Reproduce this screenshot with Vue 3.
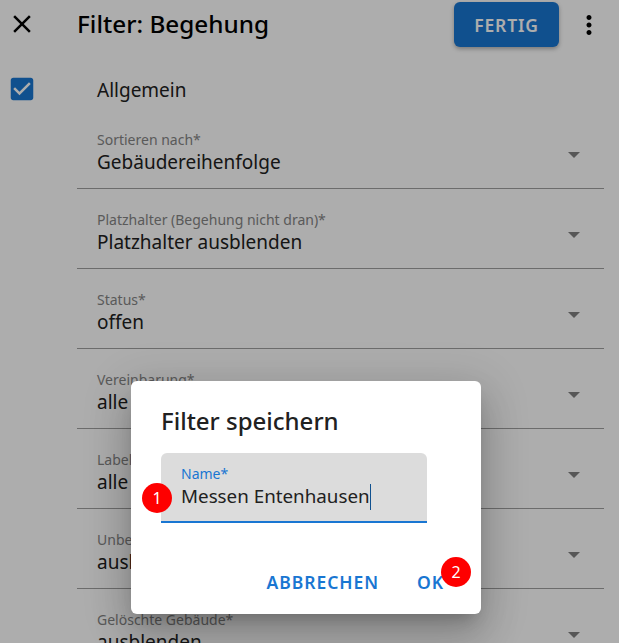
<script setup>
const fields = [
  { label: 'Sortieren nach*', value: 'Gebäudereihenfolge' },
  { label: 'Platzhalter (Begehung nicht dran)*', value: 'Platzhalter ausblenden' },
  { label: 'Status*', value: 'offen' },
  { label: 'Vereinbarung*', value: 'alle' },
  { label: 'Label*', value: 'alle' },
  { label: 'Unbekannt*', value: 'ausblenden' },
  { label: 'Gelöschte Gebäude*', value: 'ausblenden' },
]
</script>

<template>
  <div class="page">
    <header class="bar">
      <svg class="close" width="30" height="30" viewBox="0 0 24 24"><path d="M19 6.41 17.59 5 12 10.59 6.41 5 5 6.41 10.59 12 5 17.59 6.41 19 12 13.41 17.59 19 19 17.59 13.41 12z" /></svg>
      <h1 class="title">Filter: Begehung</h1>
      <button class="done">FERTIG</button>
      <svg class="more" width="30" height="30" viewBox="0 0 24 24"><path d="M12 8c1.1 0 2-.9 2-2s-.9-2-2-2-2 .9-2 2 .9 2 2 2zm0 2c-1.1 0-2 .9-2 2s.9 2 2 2 2-.9 2-2-.9-2-2-2zm0 6c-1.1 0-2 .9-2 2s.9 2 2 2 2-.9 2-2-.9-2-2-2z" /></svg>
    </header>
    <div class="general">
      <span class="check">
        <svg width="30" height="30" viewBox="0 0 24 24"><path fill="#fff" d="M5 5h14v14H5z" /><path fill="#1976d2" d="M19 3H5c-1.11 0-2 .9-2 2v14c0 1.1.89 2 2 2h14c1.11 0 2-.9 2-2V5c0-1.1-.89-2-2-2zm-9 14-5-5 1.41-1.41L10 14.17l7.59-7.59L19 8l-9 9z" /></svg>
      </span>
      <span class="general-label">Allgemein</span>
    </div>
    <div class="fields">
      <div v-for="f in fields" :key="f.label" class="field">
        <div class="field-text">
          <div class="field-label">{{ f.label }}</div>
          <div class="field-value">{{ f.value }}</div>
        </div>
        <span class="arrow"></span>
      </div>
    </div>

    <div class="scrim">
      <div class="dialog">
        <h2 class="dialog-title">Filter speichern</h2>
        <div class="input">
          <div class="input-label">Name*</div>
          <div class="input-value">Messen Entenhausen<span class="caret"></span></div>
          <span class="badge badge-one">1</span>
        </div>
        <div class="actions">
          <button class="text-btn">ABBRECHEN</button>
          <button class="text-btn ok">OK<span class="badge badge-two">2</span></button>
        </div>
      </div>
    </div>
  </div>
</template>

<style>
html, body { margin: 0; overflow: hidden; }
</style>

<style scoped>
.page {
  position: relative;
  width: 619px;
  height: 643px;
  overflow: hidden;
  background: #fff;
  font-family: "Noto Sans", "Open Sans", sans-serif;
  color: #212121;
}
.bar {
  display: flex;
  align-items: center;
  height: 48px;
  padding: 0 15px 0 7px;
}
.close { flex: none; fill: #000; }
.title {
  flex: 1;
  margin: 0 0 0 40px;
  font-size: 24.3px;
  line-height: 32px;
  font-weight: 500;
  color: #000;
}
.done {
  width: 105px;
  height: 45px;
  margin-top: 1px;
  border: 0;
  border-radius: 6px;
  background: #1976d2;
  color: #fff;
  font: 600 17.5px "Noto Sans", sans-serif;
  letter-spacing: .8px;
  box-shadow: 0 2px 4px rgba(0,0,0,.3);
}
.more { flex: none; margin-left: 15px; fill: #000; margin-bottom: -1px; }
.general {
  display: flex;
  align-items: center;
  height: 32px;
  margin-top: 26px;
  padding-left: 7px;
  font-size: 19px;
}
.check { display: flex; width: 30px; height: 30px; margin-top: -2px; }
.general-label { margin-left: 60px; }
.fields { margin: 3px 15px 0 77px; }
.field {
  display: flex;
  align-items: center;
  height: 79px;
  border-bottom: 1px solid #a0a0a0;
  padding: 0 24px 0 20px;
}
.field-text { flex: 1; padding-top: 8px; }
.field-label { font-size: 14px; line-height: 20px; color: #858585; }
.field-value { font-size: 19px; line-height: 25px; }
.arrow {
  width: 0;
  height: 0;
  margin-top: 12px;
  border-left: 6px solid transparent;
  border-right: 6px solid transparent;
  border-top: 6px solid #808080;
}
.scrim {
  position: absolute;
  inset: 0;
  background: rgba(0,0,0,.32);
  display: flex;
  justify-content: center;
  align-items: flex-start;
  padding-top: 381px;
  box-sizing: border-box;
}
.dialog {
  width: 350px;
  height: 233px;
  box-sizing: border-box;
  margin-left: -7px;
  padding: 24px 30px 0;
  background: #fff;
  border-radius: 6px;
  box-shadow: 0 11px 15px -7px rgba(0,0,0,.2), 0 24px 38px 3px rgba(0,0,0,.14), 0 9px 46px 8px rgba(0,0,0,.12);
}
.dialog-title {
  margin: 0;
  font-size: 24px;
  font-weight: 500;
  line-height: 32px;
  color: #212121;
}
.input {
  position: relative;
  width: 266px;
  height: 70px;
  margin-top: 16px;
  box-sizing: border-box;
  padding: 12px 20px 0;
  background: #dcdcdc;
  border-radius: 6px 6px 0 0;
  border-bottom: 2px solid #1976d2;
}
.input-label { font-size: 14px; line-height: 18px; color: #1976d2; }
.input-value { font-size: 18.8px; line-height: 26px; white-space: nowrap; }
.caret {
  display: inline-block;
  width: 1px;
  height: 26px;
  background: #10518f;
  vertical-align: -7px;
}
.actions {
  display: flex;
  justify-content: flex-end;
  align-items: center;
  gap: 38px;
  margin-top: 47px;
  padding-right: 7px;
}
.text-btn {
  position: relative;
  padding: 0;
  border: 0;
  background: none;
  color: #1976d2;
  font: 600 17.5px/24px "Noto Sans", sans-serif;
  letter-spacing: .95px;
}
.badge {
  position: absolute;
  width: 30px;
  height: 30px;
  border-radius: 50%;
  background: #fe0000;
  color: #fff;
  font: 400 16px/30px "Noto Sans", sans-serif;
  text-align: center;
  letter-spacing: 0;
}
.badge-one { left: -19px; top: 30px; }
.badge-two { left: 24px; top: -13px; }
</style>
